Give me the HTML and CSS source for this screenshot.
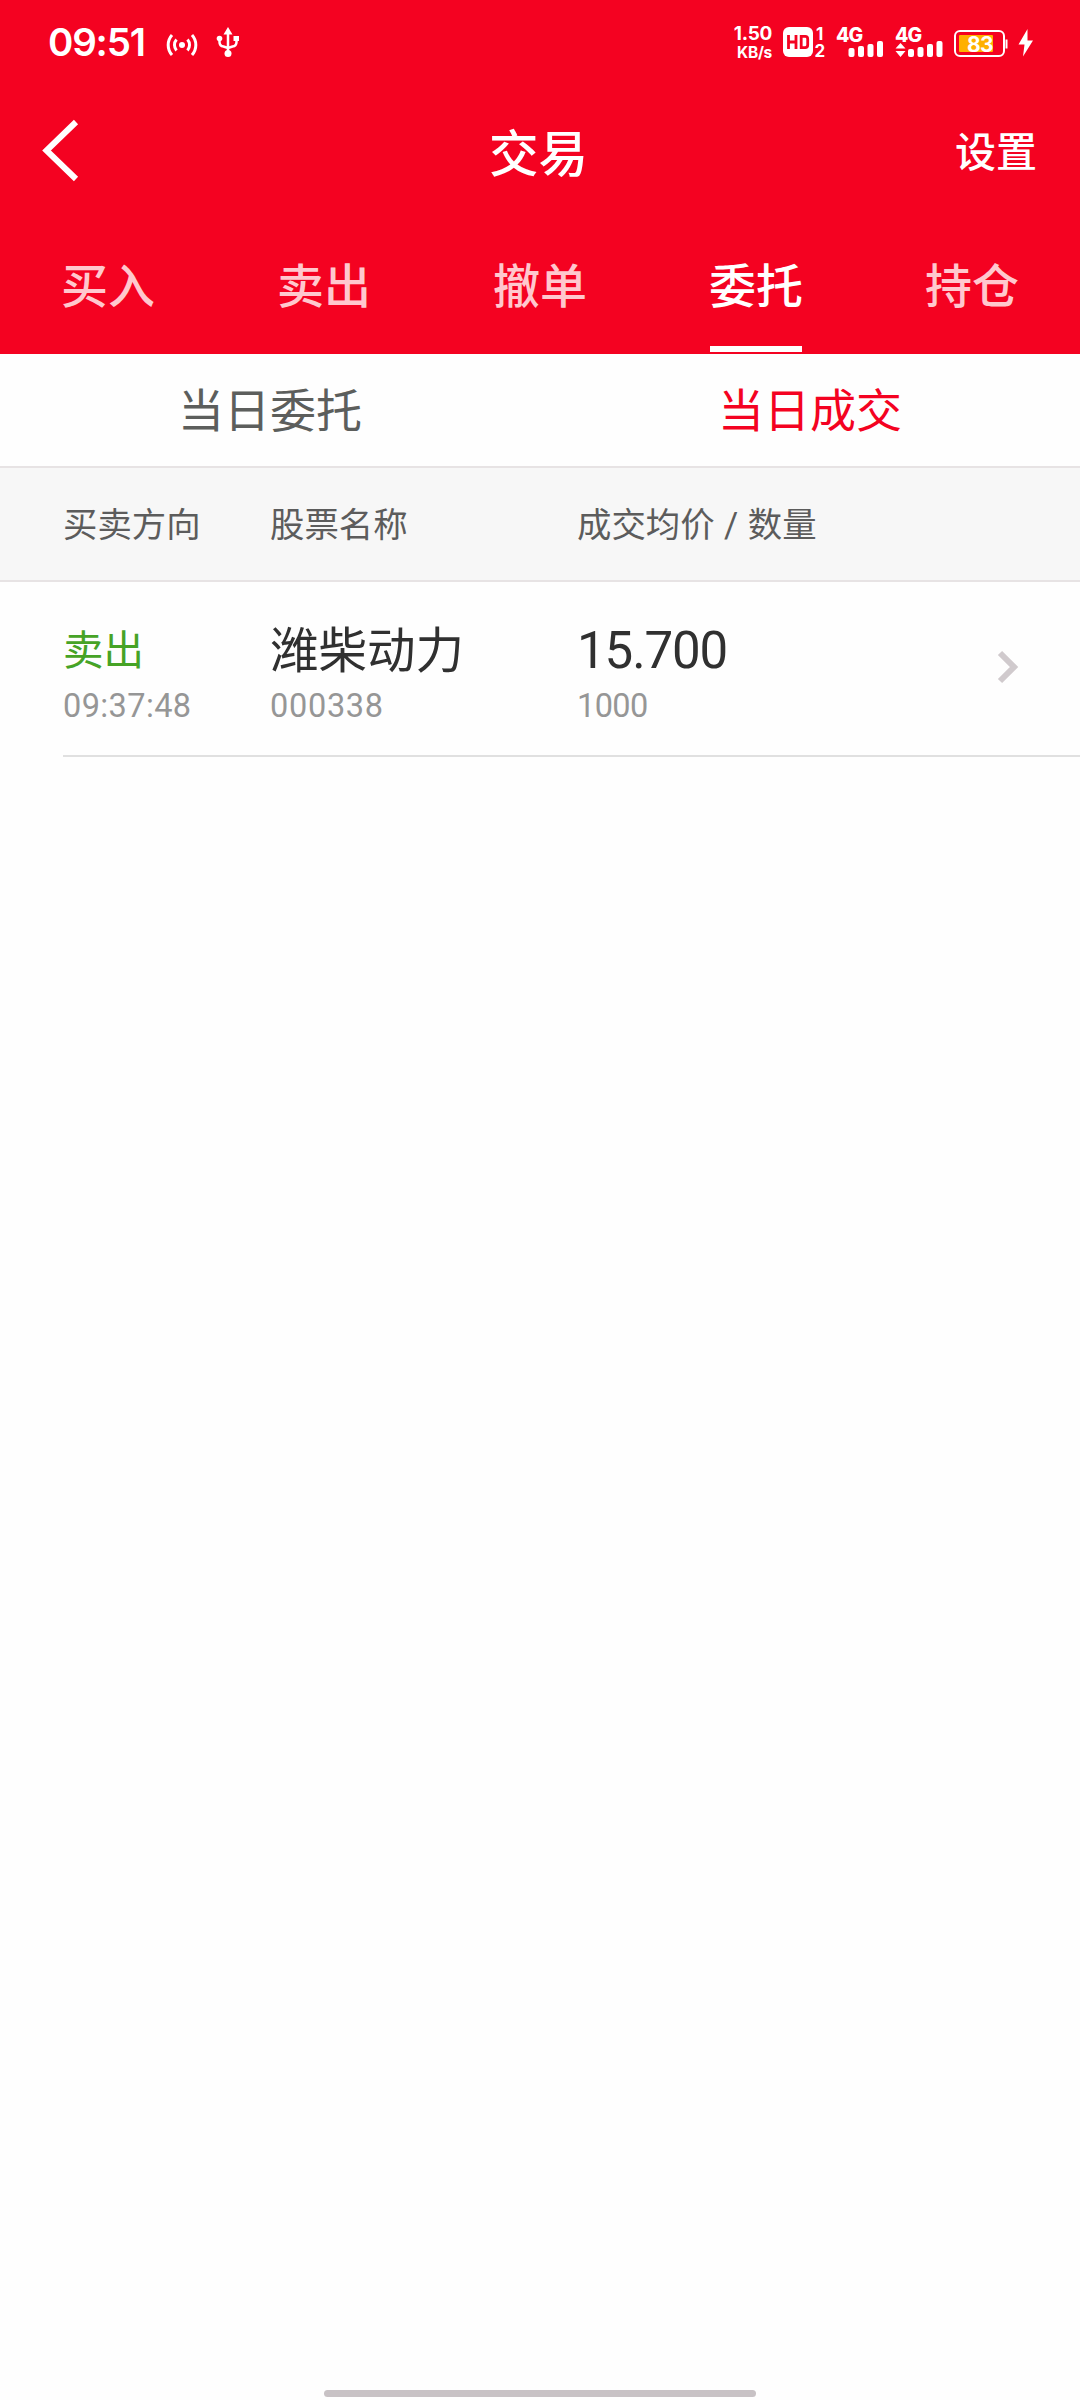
FILE: index.html
```html
<!DOCTYPE html>
<html lang="zh-CN">
<head>
  <meta charset="UTF-8">
  <title>交易</title>
  <link rel="stylesheet" href="styles.css">
</head>
<body>

  <!-- 顶部 -->
  <header class="header">
    <div class="status-bar">
      <span class="clock">09:51</span>
      <svg class="icon-hotspot" width="30" height="24" viewBox="0 0 30 24">
        <circle cx="15" cy="12" r="3" fill="#fff"/>
        <path d="M9.500 6.500a8.500 8.500 0 0 0 0 11M20.500 6.500a8.500 8.500 0 0 1 0 11M5 2a15 15 0 0 0 0 20M25 2a15 15 0 0 1 0 20" fill="none" stroke="#fff" stroke-width="3"/>
      </svg>
      <svg class="icon-usb" width="24" height="32" viewBox="0 0 24 32">
        <path d="M12 6v20M3.500 13v3q0 4 4 4.500L12 22M20.500 12v4q0 4-4 4.500L12 22" fill="none" stroke="#fff" stroke-width="2.500"/>
        <path d="M12 1l4.500 7.500h-9z" fill="#fff"/>
        <circle cx="3.500" cy="12.500" r="2.800" fill="#fff"/>
        <rect x="17.500" y="10" width="5.500" height="5" fill="#fff"/>
        <circle cx="12" cy="27.500" r="3.500" fill="#fff"/>
      </svg>

      <div class="status-right">
        <div class="speed"><span>1.50</span><small>KB/s</small></div>
        <svg class="icon-hd" width="44" height="32" viewBox="0 0 44 32">
          <rect x="0" y="1" width="30" height="30" rx="6" fill="#fff"/>
          <path d="M5.500 9v14M13 9v14M5.500 16H13" fill="none" stroke="#f40221" stroke-width="2.800"/>
          <path d="M18.200 10.400h4q2.500 0 2.500 2.500v6.200q0 2.500-2.500 2.500h-4z" fill="none" stroke="#f40221" stroke-width="2.800"/>
          <text x="33" y="13.500" class="sim">1</text>
          <text x="31.500" y="31" class="sim">2</text>
        </svg>
        <svg class="icon-signal" width="49" height="32" viewBox="0 0 49 32">
          <text x="0" y="16" class="net">4G</text>
          <rect x="12.500" y="22" width="6" height="9" rx="2" fill="#fff"/>
          <rect x="22" y="20" width="6" height="11" rx="2" fill="#fff"/>
          <rect x="31.500" y="18" width="6" height="13" rx="2" fill="#fff"/>
          <rect x="41" y="15" width="6" height="16" rx="2" fill="#fff"/>
        </svg>
        <svg class="icon-signal" width="49" height="32" viewBox="0 0 49 32">
          <text x="0" y="16" class="net">4G</text>
          <path d="M5.500 17l5 5.500h-10zM5.500 31l5-6h-10z" fill="#fff"/>
          <rect x="13" y="23" width="6" height="8" rx="2" fill="#fff"/>
          <rect x="22.500" y="21" width="6" height="10" rx="2" fill="#fff"/>
          <rect x="32" y="18" width="6" height="13" rx="2" fill="#fff"/>
          <rect x="41.500" y="15" width="6" height="16" rx="2" fill="#fff"/>
        </svg>
        <svg class="icon-battery" width="54" height="28" viewBox="0 0 54 28">
          <rect x="1" y="1" width="49" height="25" rx="5" fill="none" stroke="#fff" stroke-width="2"/>
          <rect x="5" y="5" width="34" height="17" rx="1" fill="#ffb000"/>
          <path d="M52.500 9.500v9" stroke="#fff" stroke-width="2"/>
          <text x="26" y="21.500" text-anchor="middle" class="level">83</text>
        </svg>
        <svg class="icon-bolt" width="16" height="28" viewBox="0 0 16 28">
          <path d="M9.500 0L.5 15.500h6L5 27.500 15 11.500H9.500z" fill="#fff"/>
        </svg>
      </div>
    </div>

    <div class="title-bar">
      <svg class="back" width="40" height="62" viewBox="0 0 40 62">
        <path d="M36 2L6.500 30.500 36 59" fill="none" stroke="#fff" stroke-width="6"/>
      </svg>
      <h1>交易</h1>
      <a class="setting">设置</a>
    </div>

    <nav class="tabs">
      <a>买入</a>
      <a>卖出</a>
      <a>撤单</a>
      <a class="active">委托</a>
      <a>持仓</a>
    </nav>
  </header>

  <!-- 子标签 -->
  <div class="sub-tabs">
    <a>当日委托</a>
    <a class="active">当日成交</a>
  </div>

  <!-- 成交列表 -->
  <div class="list-head grid">
    <span>买卖方向</span>
    <span>股票名称</span>
    <span>成交均价 / 数量</span>
  </div>

  <div class="row grid">
    <div class="cell">
      <p class="side">卖出</p>
      <p class="sub time">09:37:48</p>
    </div>
    <div class="cell">
      <p class="name">潍柴动力</p>
      <p class="sub">000338</p>
    </div>
    <div class="cell">
      <p class="price">15.700</p>
      <p class="sub count">1000</p>
    </div>
    <svg class="arrow" width="24" height="34" viewBox="0 0 24 34">
      <path d="M3 3l14 14L3 31" fill="none" stroke="#d0cacd" stroke-width="6"/>
    </svg>
  </div>

  <div class="home-bar"></div>

</body>
</html>
```
FILE: styles.css
```css
/* 公共 */
* { box-sizing: border-box; margin: 0; padding: 0; }
body {
  display: flex; flex-direction: column;
  width: 1080px; height: 2400px;
  background: #fefefe;
  font-family: Roboto, "Noto Sans CJK SC", sans-serif;
}
svg { display: block; flex: none; overflow: visible; }

/* 顶部 */
.header { height: 354px; background: #f40221; color: #fff; }

.status-bar {
  display: flex; align-items: flex-start;
  height: 84px; padding: 0 46px 0 48px;
}
.clock {
  width: 119px; padding-top: 22px;
  font: 600 38.5px/40px Inter, sans-serif;
  letter-spacing: -1.2px;
}
.icon-hotspot { margin-top: 33px; }
.icon-usb { margin: 26px 0 0 19px; }
.status-right { display: flex; align-items: flex-start; margin-left: auto; }
.speed {
  display: flex; flex-direction: column; align-items: flex-end;
  padding-top: 24px; margin-right: 11px;
  font: 700 19px/19px Inter, sans-serif;
  letter-spacing: -0.3px;
}
.speed small { font-size: 15.5px; line-height: 19px; }
.icon-hd { margin: 26px 9px 0 0; }
.sim { font: 700 17px Inter, sans-serif; fill: #fff; }
.icon-signal { margin: 26px 10px 0 0; }
.net { font: 800 19.5px Inter, sans-serif; fill: #fff; letter-spacing: -1px; }
.icon-battery { margin: 30px 10px 0 0; }
.level { font: 700 21px Inter, sans-serif; fill: #fff; letter-spacing: -0.5px; }
.icon-bolt { margin-top: 29px; }

.title-bar {
  display: grid; grid-template-columns: 1fr auto 1fr; align-items: center;
  height: 134px; padding: 0 43px 0 40px;
}
.title-bar h1 { padding-top: 7px; font-size: 49.5px; font-weight: 500; line-height: 60px; }
.setting { justify-self: end; padding-top: 4px; font-size: 41px; font-weight: 500; line-height: 60px; }

.tabs { display: flex; height: 134px; }
.tabs a {
  flex: 1;
  height: 134px; padding-top: 39px;
  font-size: 47px; font-weight: 500; line-height: 60px;
  text-align: center; white-space: nowrap;
  color: #ffc8ce;
}
.tabs .active { color: #fff; }
.tabs .active::after {
  content: ""; display: block;
  width: 92px; height: 6px; margin: 29px auto 0;
  background: #fff;
}

/* 子标签 */
.sub-tabs { display: flex; height: 114px; border-bottom: 2px solid #e7e3e4; }
.sub-tabs a {
  flex: 1; text-align: center;
  font-size: 46px; line-height: 114px; color: #5c5e5c;
}
.sub-tabs .active { color: #f40221; }

/* 列表 */
.grid { display: grid; grid-template-columns: 207px 307px 1fr auto; }
.list-head {
  height: 114px; padding-left: 63px;
  border-bottom: 2px solid #e7e3e4;
  background: #f7f7f7;
  font-size: 34.4px; line-height: 114px; word-spacing: 1px; color: #5c5c5c;
}
.row {
  height: 175px; margin-left: 63px; padding: 0 59px 0 0;
  border-bottom: 2px solid #e0e0e0;
}
.cell { padding-top: 36px; }
.cell p { white-space: nowrap; }
.side { padding-top: 1px; font-size: 40.5px; line-height: 65px; color: #46a326; }
.name { padding-top: 2px; font-size: 48.5px; line-height: 64px; color: #303030; }
.price { font-size: 51px; line-height: 66px; letter-spacing: -1.1px; color: #303030; }
.sub { font-size: 32.5px; line-height: 44px; letter-spacing: 0.7px; color: #969696; }
.sub.time { letter-spacing: 0.4px; }
.sub.count { letter-spacing: -0.6px; }
.arrow { margin-top: 68px; }

.home-bar {
  width: 432px; height: 7px; margin: auto auto 3px;
  border-radius: 4px; background: #c8c2c5;
}
```
